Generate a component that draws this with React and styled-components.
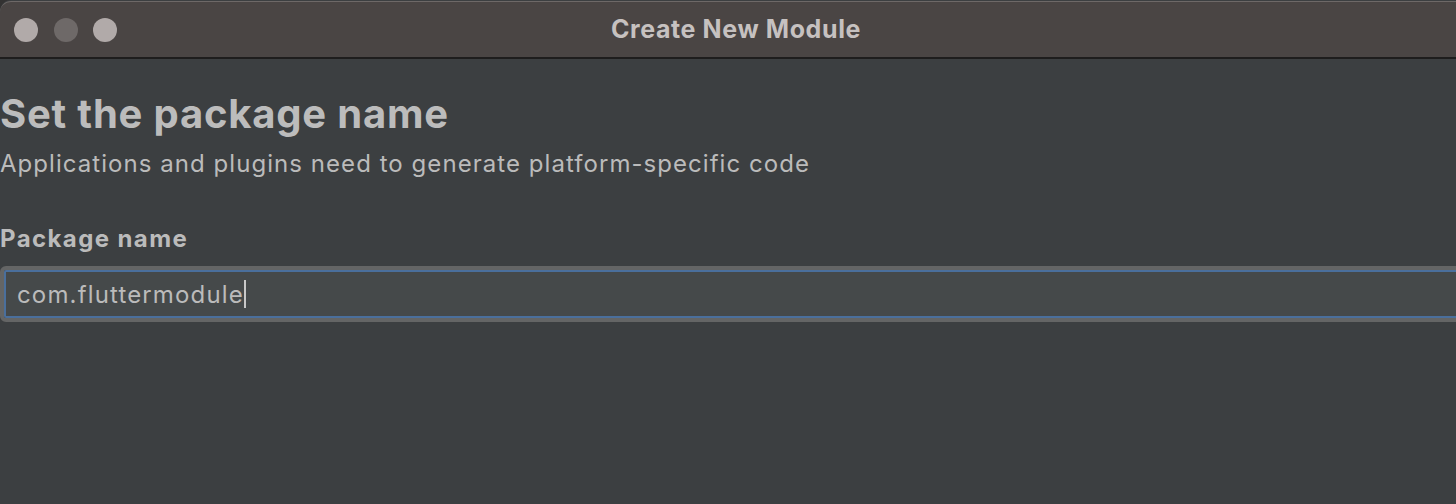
import React from 'react';
import styled, { createGlobalStyle } from 'styled-components';

const GlobalStyle = createGlobalStyle`
  html, body {
    margin: 0;
    padding: 0;
    background: #333232;
    font-family: Inter, "Noto Sans", "Liberation Sans", sans-serif;
  }
`

const Window = styled.div`
  width: 1456px;
  height: 504px;
  display: flex;
  flex-direction: column;
  overflow: hidden;
  border-top-left-radius: 11px;
  background: #3c3f41;
`

const TitleBar = styled.div`
  height: 55px;
  flex-shrink: 0;
  position: relative;
  display: flex;
  align-items: center;
  justify-content: center;
  background: #4a4544;
  border-top: 1px solid #6d6867;
  border-bottom: 2px solid #1e1d1d;
  margin-top: 1px;
  border-top-left-radius: 11px;
`

const Lights = styled.div`
  position: absolute;
  left: 14px;
  top: 16px;
  display: flex;
  gap: 15.5px;
`

const Light = styled.span`
  width: 24px;
  height: 24px;
  border-radius: 50%;
  background: ${p => (p.$dim ? '#6e6968' : '#b1aaa9')};
`

const Title = styled.div`
  color: #c6c1c0;
  font-size: 25px;
  font-weight: 700;
  letter-spacing: 0.6px;
  margin-left: 16px;
  margin-top: -1px;
`

const Content = styled.div`
  display: flex;
  flex-direction: column;
  padding-top: 31px;
`

const Heading = styled.h1`
  margin: 0;
  color: #bcbcbc;
  font-size: 40px;
  font-weight: 700;
  line-height: 48px;
  letter-spacing: 0.8px;
`

const Subtitle = styled.p`
  margin: 11px 0 0;
  color: #bbbbbb;
  font-size: 24px;
  line-height: 30px;
  letter-spacing: 1.05px;
`

const Label = styled.label`
  margin-top: 45px;
  color: #bbbbbb;
  font-size: 24px;
  font-weight: 700;
  line-height: 30px;
  letter-spacing: 1.4px;
`

const InputWrap = styled.div`
  margin-top: 12px;
  width: 1480px;
  height: 56px;
  box-sizing: border-box;
  border: 4px solid #646565;
  border-radius: 6px;
  display: flex;
`

const Input = styled.div`
  flex: 1;
  display: flex;
  align-items: center;
  border: 2px solid #4a6f9c;
  border-radius: 2px;
  background: #45494a;
  padding-left: 11px;
  color: #bbbbbb;
  font-size: 24px;
  letter-spacing: 1.15px;
`

const Caret = styled.span`
  display: inline-block;
  width: 2px;
  height: 28px;
  background: #c8c8c8;
`

export default function App() {
  return (
    <>
      <GlobalStyle />
      <Window>
        <TitleBar>
          <Lights>
            <Light />
            <Light $dim />
            <Light />
          </Lights>
          <Title>Create New Module</Title>
        </TitleBar>
        <Content>
          <Heading>Set the package name</Heading>
          <Subtitle>Applications and plugins need to generate platform-specific code</Subtitle>
          <Label>Package name</Label>
          <InputWrap>
            <Input>
              com.fluttermodule<Caret />
            </Input>
          </InputWrap>
        </Content>
      </Window>
    </>
  );
}
